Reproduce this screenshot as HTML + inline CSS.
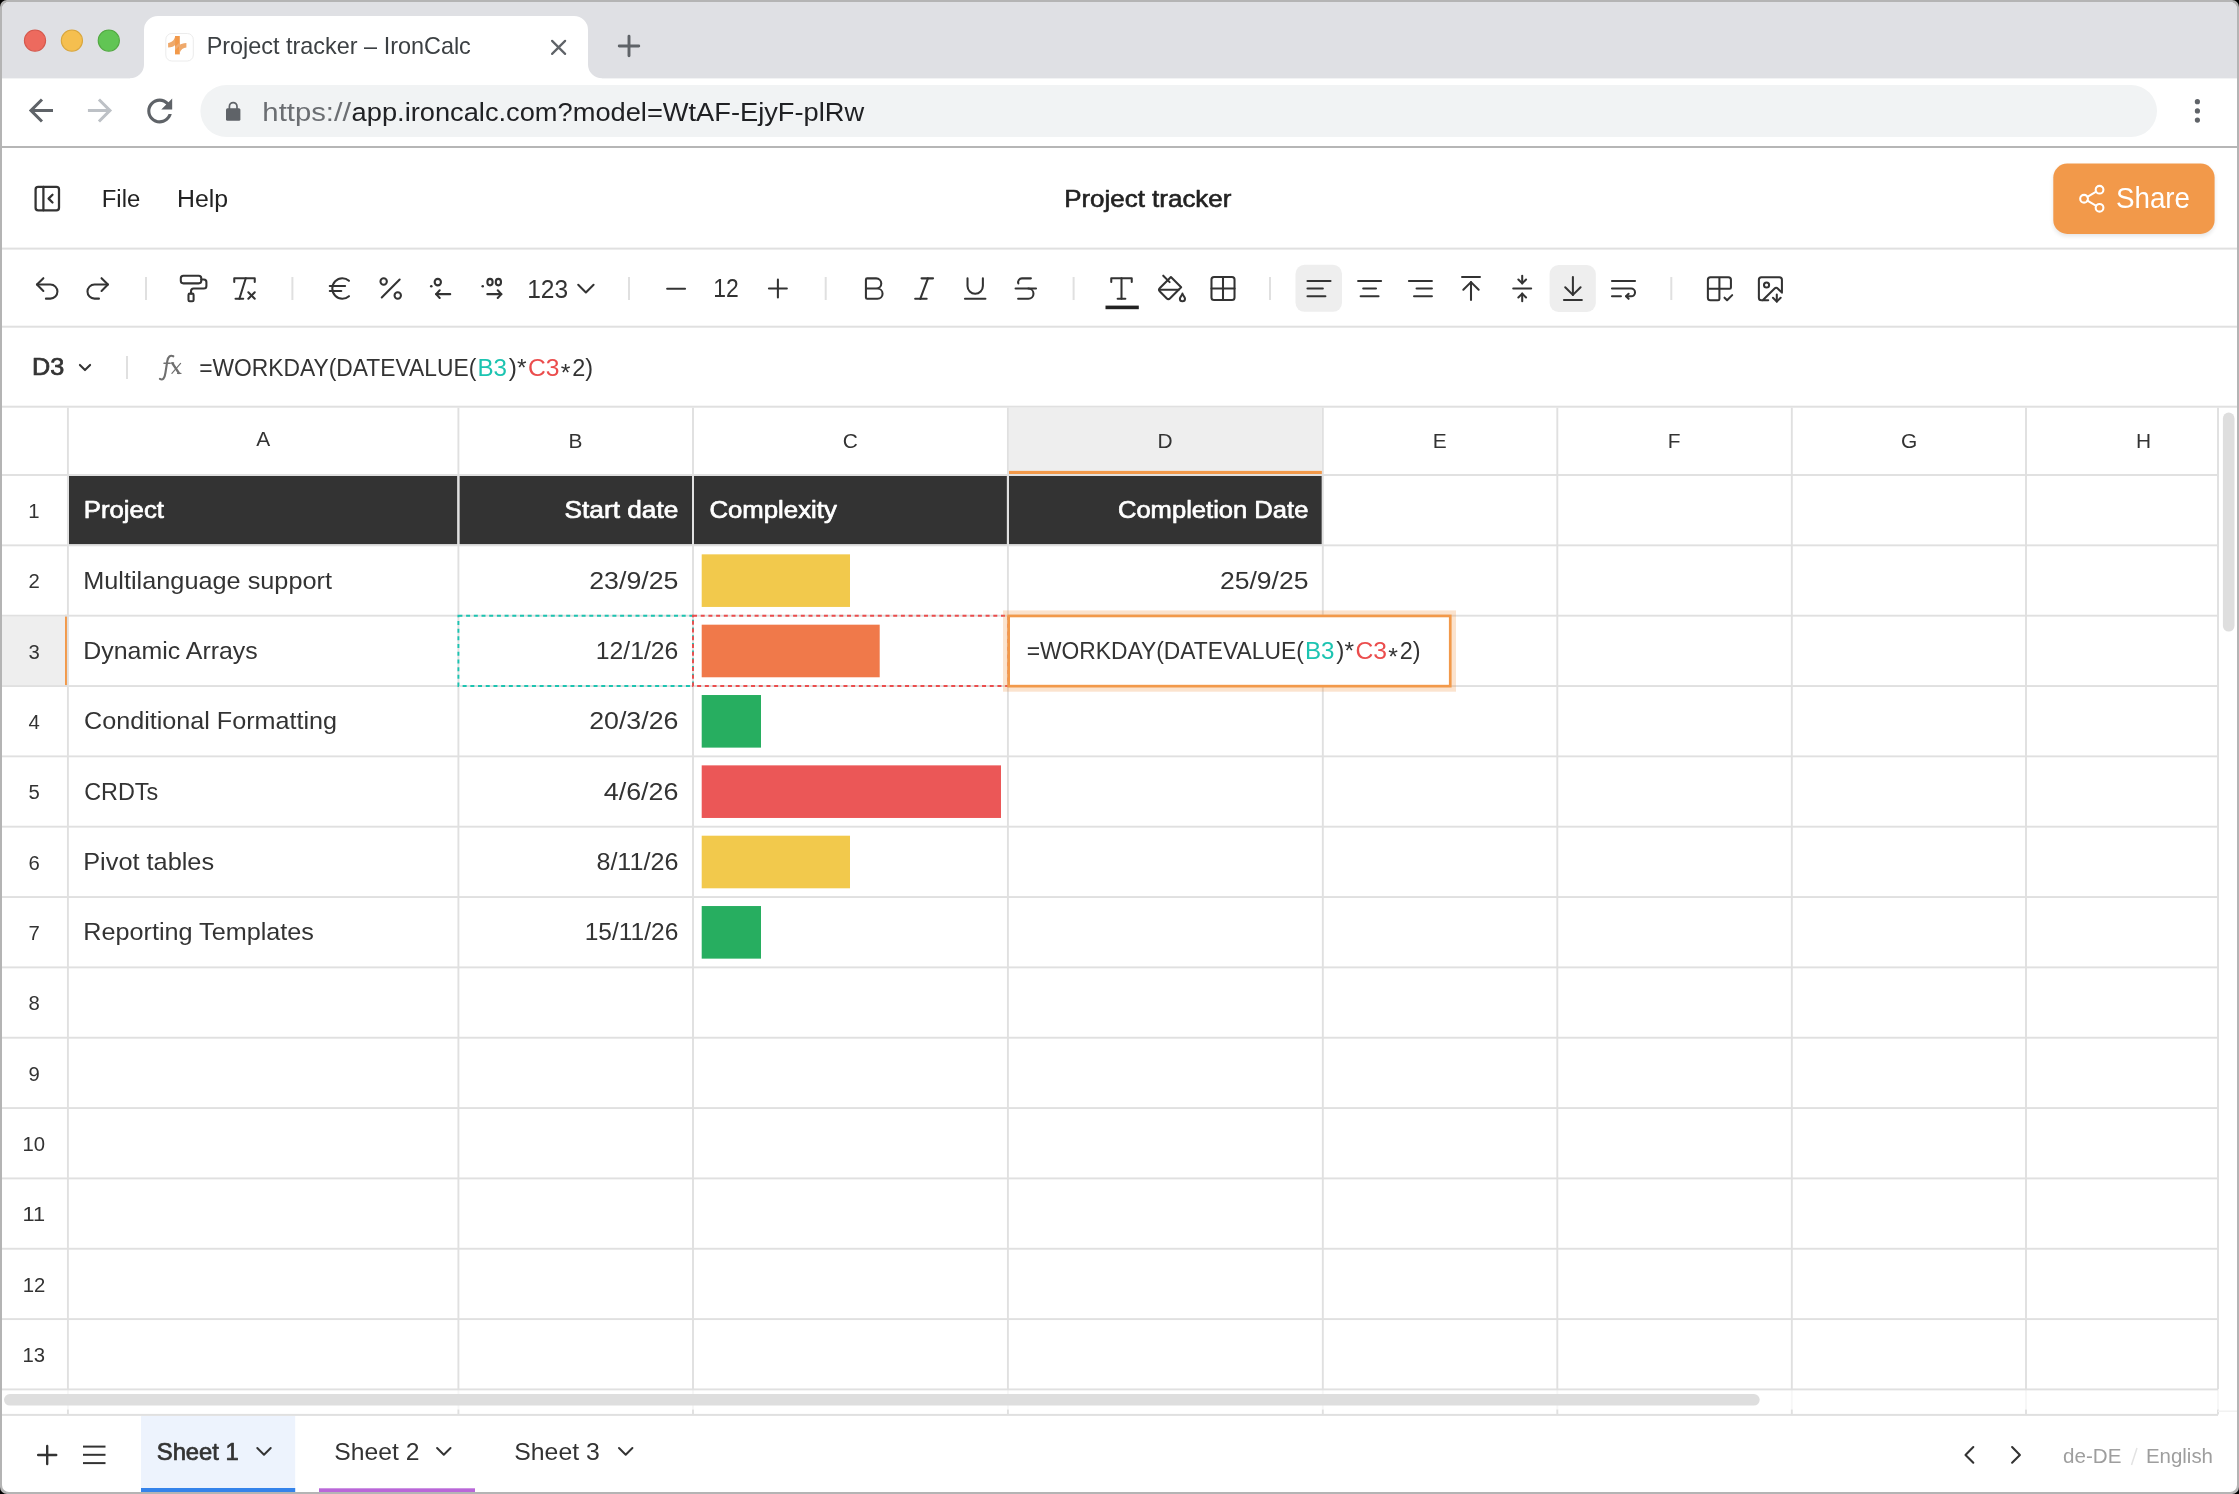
<!DOCTYPE html>
<html><head><meta charset="utf-8"><title>Project tracker – IronCalc</title>
<style>html,body{margin:0;padding:0;background:#000;overflow:hidden;width:2239px;height:1494px}
svg{will-change:transform}</style></head><body>
<svg width="2239" height="1494" viewBox="0 0 2239 1494" style="display:block">
<defs><clipPath id="win"><rect x="2" y="2" width="2235" height="1490" rx="7" ry="7"/></clipPath><filter id="sh" x="-20%" y="-20%" width="140%" height="160%"><feGaussianBlur stdDeviation="2"/></filter></defs>
<rect width="2239" height="1494" fill="#000"/>
<rect width="2239" height="1494" rx="7" fill="#b4b4b4"/>
<g clip-path="url(#win)">
<rect width="2239" height="1494" fill="#fff"/>
<rect x="0" y="0" width="2239" height="78.4" fill="#dfe0e4"/>
<path d="M130 78.4 A14 14 0 0 0 144 64.4 V30 A14 14 0 0 1 158 16 H574 A14 14 0 0 1 588 30 V64.4 A14 14 0 0 0 602 78.4 V80 H130 Z" fill="#fff"/>
<circle cx="35" cy="40.6" r="10.6" fill="#ed6a5e" stroke="#d5594d" stroke-width="1.1"/>
<circle cx="71.9" cy="40.6" r="10.6" fill="#f5bf4f" stroke="#d9a63c" stroke-width="1.1"/>
<circle cx="108.8" cy="40.6" r="10.6" fill="#61c554" stroke="#52a942" stroke-width="1.1"/>
<rect x="165.8" y="33.5" width="27.5" height="27.5" rx="6" fill="#fff" stroke="#ececec" stroke-width="1"/>
<rect x="175.0" y="36.0" width="4.8" height="18.4" fill="#f2994a"/>
<path d="M168.1 43 C171.5 42.6 174.2 40.6 175.2 36.3 V44.7 C174 46.5 171.5 47.4 168.1 47.6 Z" fill="#efa96b"/>
<path d="M186.4 43 C183 43.2 180.9 44 179.6 44.8 V53.1 C180.8 49.8 183.2 47.8 186.4 47.6 Z" fill="#efa96b"/>
<path d="M175.0 46.8 L179.8 42.2 V45.6 L175.0 50.2 Z" fill="#efab70"/>
<text x="206.68" y="54.00" font-family="Liberation Sans" font-size="24" fill="#3c4043" textLength="264.14" lengthAdjust="spacingAndGlyphs" >Project tracker – IronCalc</text>
<g transform="translate(547.44,36.24) scale(0.93)" fill="none" stroke="#5f6368" stroke-width="2.4" stroke-linecap="round" stroke-linejoin="round" ><path d="M5 5 L19 19 M19 5 L5 19"/></g>
<g transform="translate(614.36,31.36) scale(1.22)" fill="none" stroke="#5f6368" stroke-width="2.4" stroke-linecap="round" stroke-linejoin="round" ><path d="M12 4v16M4 12h16"/></g>
<rect x="0" y="146" width="2239" height="2" fill="#b6b6b6"/>
<rect x="200.4" y="85" width="1956.6" height="52" rx="26" fill="#f1f3f4"/>
<g transform="translate(40.9,110.5) scale(1.51) translate(-12,-12)" fill="#5f6368"><path d="M20 11H7.83l5.59-5.59L12 4l-8 8 8 8 1.41-1.41L7.83 13H20v-2z"/></g>
<g transform="translate(100,110.5) scale(1.51) translate(-12,-12)" fill="#bdc1c6"><path d="M4 11h12.17l-5.59-5.59L12 4l8 8-8 8-1.41-1.41L16.17 13H4v-2z"/></g>
<g transform="translate(159.7,111) scale(1.56) translate(-12,-12)" fill="#5f6368"><path d="M17.65 6.35C16.2 4.9 14.21 4 12 4c-4.42 0-7.99 3.58-7.99 8s3.57 8 7.99 8c3.73 0 6.840-2.55 7.73-6h-2.08c-.82 2.33-3.04 4-5.65 4-3.310 0-6-2.69-6-6s2.69-6 6-6c1.66 0 3.14.69 4.22 1.78L13 11h7V4l-2.35 2.35z"/></g>
<rect x="226" y="108.3" width="14.4" height="12.5" rx="1.5" fill="#5f6368"/>
<path d="M229.4 109 V106.4 A3.8 3.8 0 0 1 237 106.4 V109" fill="none" stroke="#5f6368" stroke-width="1.7"/>
<text x="262.37" y="121.10" font-family="Liberation Sans" font-size="26.3" fill="#6b6e72" textLength="71.60" lengthAdjust="spacingAndGlyphs" >https:</text>
<text x="334.00" y="121.10" font-family="Liberation Sans" font-size="26.3" fill="#6b6e72" textLength="17.00" lengthAdjust="spacingAndGlyphs" >//</text>
<text x="351.64" y="121.10" font-family="Liberation Sans" font-size="26.3" fill="#202124" textLength="512.49" lengthAdjust="spacingAndGlyphs" >app.ironcalc.com?model=WtAF-EjyF-plRw</text>
<circle cx="2197.4" cy="101.7" r="2.6" fill="#5f6368"/>
<circle cx="2197.4" cy="110.9" r="2.6" fill="#5f6368"/>
<circle cx="2197.4" cy="120.1" r="2.6" fill="#5f6368"/>
<rect x="0" y="247.6" width="2239" height="2" fill="#e0e0e0"/>
<g transform="translate(31.70,183.00) scale(1.3)" fill="none" stroke="#333" stroke-width="1.75" stroke-linecap="round" stroke-linejoin="round" ><rect width="18" height="18" x="3" y="3" rx="2"/><path d="M9 3v18"/><path d="m16 15-3-3 3-3"/></g>
<text x="101.74" y="206.50" font-family="Liberation Sans" font-size="24.4" fill="#222" textLength="38.52" lengthAdjust="spacingAndGlyphs" >File</text>
<text x="176.96" y="206.50" font-family="Liberation Sans" font-size="24.4" fill="#222" textLength="51.08" lengthAdjust="spacingAndGlyphs" >Help</text>
<text x="1064.17" y="206.70" font-family="Liberation Sans" font-size="24.0" stroke="#222" stroke-width="0.6" stroke-linejoin="round" fill="#222" textLength="167.26" lengthAdjust="spacingAndGlyphs" >Project tracker</text>
<rect x="2053.3" y="166" width="161.3" height="70.3" rx="14" fill="#000" opacity="0.10" filter="url(#sh)"/>
<rect x="2053.3" y="163.6" width="161.3" height="70.3" rx="14" fill="#f2994a"/>
<g transform="translate(2076.32,183.27) scale(1.29)" fill="none" stroke="#fff" stroke-width="1.6" stroke-linecap="round" stroke-linejoin="round" ><circle cx="18" cy="5" r="3"/><circle cx="6" cy="12" r="3"/><circle cx="18" cy="19" r="3"/><line x1="8.59" x2="15.42" y1="13.51" y2="17.49"/><line x1="15.41" x2="8.59" y1="6.51" y2="10.49"/></g>
<text x="2115.94" y="208.00" font-family="Liberation Sans" font-size="29" fill="#fff" textLength="74.09" lengthAdjust="spacingAndGlyphs" >Share</text>
<rect x="0" y="325.7" width="2239" height="2" fill="#e0e0e0"/>
<rect x="145" y="277" width="2" height="23" fill="#e0e0e0"/>
<rect x="291.4" y="277" width="2" height="23" fill="#e0e0e0"/>
<rect x="628" y="277" width="2" height="23" fill="#e0e0e0"/>
<rect x="824.7" y="277" width="2" height="23" fill="#e0e0e0"/>
<rect x="1072.6" y="277" width="2" height="23" fill="#e0e0e0"/>
<rect x="1269" y="277" width="2" height="23" fill="#e0e0e0"/>
<rect x="1670.3" y="277" width="2" height="23" fill="#e0e0e0"/>
<rect x="1295.5" y="264.8" width="46.5" height="47" rx="9" fill="#eeeeee"/>
<rect x="1549.6" y="265" width="46.2" height="47" rx="9" fill="#eeeeee"/>
<g transform="translate(31.84,273.04) scale(1.28)" fill="none" stroke="#333" stroke-width="1.6" stroke-linecap="round" stroke-linejoin="round" ><path d="M9 14 4 9l5-5"/><path d="M4 9h10.5a5.5 5.5 0 0 1 5.5 5.5a5.5 5.5 0 0 1-5.5 5.5H11"/></g>
<g transform="translate(82.34,273.04) scale(1.28)" fill="none" stroke="#333" stroke-width="1.6" stroke-linecap="round" stroke-linejoin="round" ><path d="m15 14 5-5-5-5"/><path d="M20 9H9.5A5.5 5.5 0 0 0 4 14.5A5.5 5.5 0 0 0 9.5 20H13"/></g>
<g transform="translate(178.24,273.14) scale(1.28)" fill="none" stroke="#333" stroke-width="1.6" stroke-linecap="round" stroke-linejoin="round" ><rect width="16" height="6" x="2" y="2" rx="2"/><path d="M10 16v-2a2 2 0 0 1 2-2h8a2 2 0 0 0 2-2V7a2 2 0 0 0-2-2h-2"/><rect width="4" height="6" x="8" y="16" rx="1"/></g>
<g transform="translate(229.14,273.14) scale(1.28)" fill="none" stroke="#333" stroke-width="1.6" stroke-linecap="round" stroke-linejoin="round" ><path d="M4 7V4h16v3"/><path d="M5 20h6"/><path d="M13 4 8 20"/><path d="m15 15 5 5"/><path d="m20 15-5 5"/></g>
<g transform="translate(324.64,273.14) scale(1.28)" fill="none" stroke="#333" stroke-width="1.6" stroke-linecap="round" stroke-linejoin="round" ><path d="M4 10h12"/><path d="M4 14h9"/><path d="M19 6a7.7 7.7 0 0 0-5.2-2A7.9 7.9 0 0 0 6 12c0 4.4 3.5 8 7.8 8 2 0 3.8-.8 5.2-2"/></g>
<g transform="translate(375.34,273.14) scale(1.28)" fill="none" stroke="#333" stroke-width="1.6" stroke-linecap="round" stroke-linejoin="round" ><line x1="19" x2="5" y1="5" y2="19"/><circle cx="6.5" cy="6.5" r="2.5"/><circle cx="17.5" cy="17.5" r="2.5"/></g>
<g transform="translate(425.64,273.14) scale(1.28)" fill="none" stroke="#333" stroke-width="1.65" stroke-linecap="round" stroke-linejoin="round" ><path d="M4.4 10.2h.01" stroke-width="2"/><ellipse cx="9.5" cy="7" rx="2.45" ry="2.55"/><path d="M19.2 16.4H8.2"/><path d="m11 13.4-2.8 3 2.8 3"/></g>
<g transform="translate(476.74,273.14) scale(1.28)" fill="none" stroke="#333" stroke-width="1.65" stroke-linecap="round" stroke-linejoin="round" ><path d="M4.66 10.2h.01" stroke-width="2"/><ellipse cx="10.36" cy="7" rx="2.05" ry="2.55"/><ellipse cx="16.9" cy="7" rx="2.05" ry="2.55"/><path d="M8.3 16.4h10.9"/><path d="m16.4 13.4 2.8 3-2.8 3"/></g>
<text x="527.13" y="297.60" font-family="Liberation Sans" font-size="25" fill="#333" textLength="40.95" lengthAdjust="spacingAndGlyphs" >123</text>
<g transform="translate(570.54,273.24) scale(1.28)" fill="none" stroke="#333" stroke-width="1.6" stroke-linecap="round" stroke-linejoin="round" ><path d="m6 9 6 6 6-6"/></g>
<g transform="translate(660.74,273.34) scale(1.28)" fill="none" stroke="#333" stroke-width="1.6" stroke-linecap="round" stroke-linejoin="round" ><path d="M5 12h14"/></g>
<text x="713.25" y="296.90" font-family="Liberation Sans" font-size="25" fill="#333" textLength="25.50" lengthAdjust="spacingAndGlyphs" >12</text>
<g transform="translate(762.54,273.24) scale(1.28)" fill="none" stroke="#333" stroke-width="1.6" stroke-linecap="round" stroke-linejoin="round" ><path d="M5 12h14"/><path d="M12 5v14"/></g>
<g transform="translate(858.24,273.24) scale(1.28)" fill="none" stroke="#333" stroke-width="1.6" stroke-linecap="round" stroke-linejoin="round" ><path d="M6 12h9a4 4 0 0 1 0 8H7a1 1 0 0 1-1-1V5a1 1 0 0 1 1-1h7a4 4 0 0 1 0 8"/></g>
<g transform="translate(908.74,273.24) scale(1.28)" fill="none" stroke="#333" stroke-width="1.6" stroke-linecap="round" stroke-linejoin="round" ><line x1="19" x2="10" y1="4" y2="4"/><line x1="14" x2="5" y1="20" y2="20"/><line x1="15" x2="9" y1="4" y2="20"/></g>
<g transform="translate(959.84,273.24) scale(1.28)" fill="none" stroke="#333" stroke-width="1.6" stroke-linecap="round" stroke-linejoin="round" ><path d="M6 4v6a6 6 0 0 0 12 0V4"/><line x1="4" x2="20" y1="20" y2="20"/></g>
<g transform="translate(1010.44,273.24) scale(1.28)" fill="none" stroke="#333" stroke-width="1.6" stroke-linecap="round" stroke-linejoin="round" ><path d="M16 4H9a3 3 0 0 0-2.83 4"/><path d="M14 12a4 4 0 0 1 0 8H6"/><line x1="4" x2="20" y1="12" y2="12"/></g>
<g transform="translate(1106.14,273.14) scale(1.28)" fill="none" stroke="#333" stroke-width="1.6" stroke-linecap="round" stroke-linejoin="round" ><polyline points="4 7 4 4 20 4 20 7"/><line x1="9" x2="15" y1="20" y2="20"/><line x1="12" x2="12" y1="4" y2="20"/></g>
<rect x="1105.5" y="305.6" width="33.3" height="3.6" fill="#222"/>
<g transform="translate(1156.84,273.14) scale(1.28)" fill="none" stroke="#333" stroke-width="1.6" stroke-linecap="round" stroke-linejoin="round" ><path d="m19 11-8-8-8.6 8.6a2 2 0 0 0 0 2.8l5.2 5.2c.8.8 2 .8 2.8 0L19 11Z"/><path d="m5 2 5 5"/><path d="M2 13h15"/><path d="M22 20a2 2 0 1 1-4 0c0-1.6 1.7-2.4 2-4 .3 1.6 2 2.4 2 4Z"/></g>
<g transform="translate(1207.64,273.14) scale(1.28)" fill="none" stroke="#333" stroke-width="1.6" stroke-linecap="round" stroke-linejoin="round" ><rect width="18" height="18" x="3" y="3" rx="2"/><path d="M3 12h18"/><path d="M12 3v18"/></g>
<g transform="translate(1303.64,273.24) scale(1.28)" fill="none" stroke="#333" stroke-width="1.6" stroke-linecap="round" stroke-linejoin="round" ><line x1="21" x2="3" y1="6" y2="6"/><line x1="15" x2="3" y1="12" y2="12"/><line x1="17" x2="3" y1="18" y2="18"/></g>
<g transform="translate(1354.24,273.24) scale(1.28)" fill="none" stroke="#333" stroke-width="1.6" stroke-linecap="round" stroke-linejoin="round" ><line x1="21" x2="3" y1="6" y2="6"/><line x1="17" x2="7" y1="12" y2="12"/><line x1="19" x2="5" y1="18" y2="18"/></g>
<g transform="translate(1405.04,273.24) scale(1.28)" fill="none" stroke="#333" stroke-width="1.6" stroke-linecap="round" stroke-linejoin="round" ><line x1="21" x2="3" y1="6" y2="6"/><line x1="21" x2="9" y1="12" y2="12"/><line x1="21" x2="7" y1="18" y2="18"/></g>
<g transform="translate(1455.64,273.14) scale(1.28)" fill="none" stroke="#333" stroke-width="1.6" stroke-linecap="round" stroke-linejoin="round" ><path d="M5 3h14"/><path d="m18 13-6-6-6 6"/><path d="M12 7v14"/></g>
<g transform="translate(1506.84,273.14) scale(1.28)" fill="none" stroke="#333" stroke-width="1.6" stroke-linecap="round" stroke-linejoin="round" ><path d="M5 12h14"/><path d="M12 2v6"/><path d="m9 5 3 3 3-3"/><path d="M12 22v-6"/><path d="m9 19 3-3 3 3"/></g>
<g transform="translate(1557.54,273.14) scale(1.28)" fill="none" stroke="#333" stroke-width="1.6" stroke-linecap="round" stroke-linejoin="round" ><path d="M12 17V3"/><path d="m6 11 6 6 6-6"/><path d="M19 21H5"/></g>
<g transform="translate(1608.14,273.24) scale(1.28)" fill="none" stroke="#333" stroke-width="1.6" stroke-linecap="round" stroke-linejoin="round" ><line x1="3" x2="21" y1="6" y2="6"/><path d="M3 12h15a3 3 0 1 1 0 6h-4"/><polyline points="16 16 14 18 16 20"/><line x1="3" x2="10" y1="18" y2="18"/></g>
<g transform="translate(1704.04,273.34) scale(1.28)" fill="none" stroke="#333" stroke-width="1.6" stroke-linecap="round" stroke-linejoin="round" ><path d="M12 3v17a1 1 0 0 1-1 1H5a2 2 0 0 1-2-2V5a2 2 0 0 1 2-2h14a2 2 0 0 1 2 2v6a1 1 0 0 1-1 1H3"/><path d="m16 19 2 2 4-4"/></g>
<g transform="translate(1755.04,273.44) scale(1.28)" fill="none" stroke="#333" stroke-width="1.6" stroke-linecap="round" stroke-linejoin="round" ><path d="M10.3 21H5a2 2 0 0 1-2-2V5a2 2 0 0 1 2-2h14a2 2 0 0 1 2 2v10l-3.1-3.1a2 2 0 0 0-2.814.014L6 21"/><path d="m14 19 3 3v-5.5"/><path d="m17 22 3-3"/><circle cx="9" cy="9" r="2"/></g>
<rect x="0" y="405.7" width="2239" height="2" fill="#e0e0e0"/>
<text x="32.08" y="375.30" font-family="Liberation Sans" font-size="23.5" stroke="#333" stroke-width="0.7" stroke-linejoin="round" fill="#333" textLength="32.28" lengthAdjust="spacingAndGlyphs" >D3</text>
<g transform="translate(74.80,357.30) scale(0.85)" fill="none" stroke="#333" stroke-width="2.4" stroke-linecap="round" stroke-linejoin="round" ><path d="m6 9 6 6 6-6"/></g>
<rect x="126" y="356" width="2" height="23" fill="#e0e0e0"/>
<g fill="none" stroke="#6f6f6f" stroke-linecap="round"><path d="M159.9 378.9 C162.6 380.6 164.6 378.6 165.4 373 L167.3 361 C168.2 356.4 170.3 354.8 173.3 356.3" stroke-width="2.1"/><path d="M164 363.3 H170.2" stroke-width="1.5"/><path d="M172.6 363.6 L178.8 372.9" stroke-width="2.4"/><path d="M180.6 363.4 L171.9 373.3" stroke-width="1.2"/><path d="M171.5 363 H173.6" stroke-width="1.3"/><path d="M177.6 373.4 H180.9" stroke-width="1.3"/></g>
<text x="199.21" y="375.50" font-family="Liberation Sans" font-size="24.4" fill="#333" textLength="277.03" lengthAdjust="spacingAndGlyphs" >=WORKDAY(DATEVALUE(</text>
<text x="477.42" y="375.50" font-family="Liberation Sans" font-size="24.4" fill="#1cc4b1" textLength="29.54" lengthAdjust="spacingAndGlyphs" >B3</text>
<text x="508.86" y="375.50" font-family="Liberation Sans" font-size="24.4" fill="#333" textLength="17.73" lengthAdjust="spacingAndGlyphs" >)*</text>
<text x="527.95" y="375.50" font-family="Liberation Sans" font-size="24.4" fill="#eb4d4d" textLength="31.54" lengthAdjust="spacingAndGlyphs" >C3</text>
<text x="560.70" y="381.10" font-family="Liberation Sans" font-size="24.4" fill="#333" textLength="9.69" lengthAdjust="spacingAndGlyphs" >*</text>
<text x="572.22" y="375.50" font-family="Liberation Sans" font-size="24.4" fill="#333" textLength="20.83" lengthAdjust="spacingAndGlyphs" >2)</text>
<rect x="1008.9" y="407.7" width="312.9" height="66.30000000000001" fill="#eeeeee"/>
<rect x="1008.6999999999999" y="470.9" width="313.29999999999995" height="3.2" fill="#f2994a"/>
<rect x="2" y="616.6800000000001" width="63" height="68.33999999999992" fill="#eeeeee"/>
<rect x="65" y="614.8800000000001" width="2.07" height="70.93999999999991" fill="#f2994a"/>
<rect x="68.9" y="476.0" width="388.5" height="68.34000000000003" fill="#333333"/>
<rect x="459.4" y="476.0" width="232.60000000000002" height="68.34000000000003" fill="#333333"/>
<rect x="694" y="476.0" width="312.9" height="68.34000000000003" fill="#333333"/>
<rect x="1008.9" y="476.0" width="312.9" height="68.34000000000003" fill="#333333"/>
<rect x="66.95" y="407.7" width="1.9" height="981.7" fill="#e0e0e0"/>
<rect x="66.95" y="1389.4" width="1.9" height="20.09999999999991" fill="#f7f7f7"/>
<rect x="66.95" y="1409.5" width="1.9" height="5" fill="#e0e0e0"/>
<rect x="457.45" y="407.7" width="1.9" height="981.7" fill="#e0e0e0"/>
<rect x="457.45" y="1389.4" width="1.9" height="20.09999999999991" fill="#f7f7f7"/>
<rect x="457.45" y="1409.5" width="1.9" height="5" fill="#e0e0e0"/>
<rect x="692.05" y="407.7" width="1.9" height="981.7" fill="#e0e0e0"/>
<rect x="692.05" y="1389.4" width="1.9" height="20.09999999999991" fill="#f7f7f7"/>
<rect x="692.05" y="1409.5" width="1.9" height="5" fill="#e0e0e0"/>
<rect x="1006.9499999999999" y="407.7" width="1.9" height="981.7" fill="#e0e0e0"/>
<rect x="1006.9499999999999" y="1389.4" width="1.9" height="20.09999999999991" fill="#f7f7f7"/>
<rect x="1006.9499999999999" y="1409.5" width="1.9" height="5" fill="#e0e0e0"/>
<rect x="1321.85" y="407.7" width="1.9" height="981.7" fill="#e0e0e0"/>
<rect x="1321.85" y="1389.4" width="1.9" height="20.09999999999991" fill="#f7f7f7"/>
<rect x="1321.85" y="1409.5" width="1.9" height="5" fill="#e0e0e0"/>
<rect x="1556.35" y="407.7" width="1.9" height="981.7" fill="#e0e0e0"/>
<rect x="1556.35" y="1389.4" width="1.9" height="20.09999999999991" fill="#f7f7f7"/>
<rect x="1556.35" y="1409.5" width="1.9" height="5" fill="#e0e0e0"/>
<rect x="1790.85" y="407.7" width="1.9" height="981.7" fill="#e0e0e0"/>
<rect x="1790.85" y="1389.4" width="1.9" height="20.09999999999991" fill="#f7f7f7"/>
<rect x="1790.85" y="1409.5" width="1.9" height="5" fill="#e0e0e0"/>
<rect x="2025.05" y="407.7" width="1.9" height="981.7" fill="#e0e0e0"/>
<rect x="2025.05" y="1389.4" width="1.9" height="20.09999999999991" fill="#f7f7f7"/>
<rect x="2025.05" y="1409.5" width="1.9" height="5" fill="#e0e0e0"/>
<rect x="2217.05" y="407.7" width="1.9" height="981.7" fill="#e0e0e0"/>
<rect x="2217.05" y="1389.4" width="1.9" height="20.09999999999991" fill="#f7f7f7"/>
<rect x="2217.05" y="1409.5" width="1.9" height="5" fill="#e0e0e0"/>
<rect x="0" y="474.05" width="2218" height="1.9" fill="#e0e0e0"/>
<rect x="0" y="544.39" width="2218" height="1.9" fill="#e0e0e0"/>
<rect x="0" y="614.73" width="2218" height="1.9" fill="#e0e0e0"/>
<rect x="0" y="685.0699999999999" width="2218" height="1.9" fill="#e0e0e0"/>
<rect x="0" y="755.41" width="2218" height="1.9" fill="#e0e0e0"/>
<rect x="0" y="825.75" width="2218" height="1.9" fill="#e0e0e0"/>
<rect x="0" y="896.0899999999999" width="2218" height="1.9" fill="#e0e0e0"/>
<rect x="0" y="966.43" width="2218" height="1.9" fill="#e0e0e0"/>
<rect x="0" y="1036.77" width="2218" height="1.9" fill="#e0e0e0"/>
<rect x="0" y="1107.11" width="2218" height="1.9" fill="#e0e0e0"/>
<rect x="0" y="1177.45" width="2218" height="1.9" fill="#e0e0e0"/>
<rect x="0" y="1247.79" width="2218" height="1.9" fill="#e0e0e0"/>
<rect x="0" y="1318.1299999999999" width="2218" height="1.9" fill="#e0e0e0"/>
<rect x="0" y="1388.47" width="2218" height="1.9" fill="#e0e0e0"/>
<text x="256.18" y="445.50" font-family="Liberation Sans" font-size="20.9" fill="#333" textLength="13.94" lengthAdjust="spacingAndGlyphs" >A</text>
<text x="568.42" y="448.00" font-family="Liberation Sans" font-size="20.9" fill="#333" textLength="13.94" lengthAdjust="spacingAndGlyphs" >B</text>
<text x="842.77" y="448.00" font-family="Liberation Sans" font-size="20.9" fill="#333" textLength="15.09" lengthAdjust="spacingAndGlyphs" >C</text>
<text x="1157.45" y="448.00" font-family="Liberation Sans" font-size="20.9" fill="#333" textLength="15.09" lengthAdjust="spacingAndGlyphs" >D</text>
<text x="1432.67" y="448.00" font-family="Liberation Sans" font-size="20.9" fill="#333" textLength="13.94" lengthAdjust="spacingAndGlyphs" >E</text>
<text x="1667.73" y="448.00" font-family="Liberation Sans" font-size="20.9" fill="#333" textLength="12.77" lengthAdjust="spacingAndGlyphs" >F</text>
<text x="1901.03" y="448.00" font-family="Liberation Sans" font-size="20.9" fill="#333" textLength="16.26" lengthAdjust="spacingAndGlyphs" >G</text>
<text x="2135.95" y="448.00" font-family="Liberation Sans" font-size="20.9" fill="#333" textLength="15.09" lengthAdjust="spacingAndGlyphs" >H</text>
<text x="28.28" y="518.00" font-family="Liberation Sans" font-size="20.3" fill="#333" textLength="11.29" lengthAdjust="spacingAndGlyphs" >1</text>
<text x="28.56" y="588.34" font-family="Liberation Sans" font-size="20.3" fill="#333" textLength="11.29" lengthAdjust="spacingAndGlyphs" >2</text>
<text x="28.61" y="658.68" font-family="Liberation Sans" font-size="20.3" fill="#333" textLength="11.29" lengthAdjust="spacingAndGlyphs" >3</text>
<text x="28.62" y="729.02" font-family="Liberation Sans" font-size="20.3" fill="#333" textLength="11.29" lengthAdjust="spacingAndGlyphs" >4</text>
<text x="28.57" y="799.36" font-family="Liberation Sans" font-size="20.3" fill="#333" textLength="11.29" lengthAdjust="spacingAndGlyphs" >5</text>
<text x="28.49" y="869.70" font-family="Liberation Sans" font-size="20.3" fill="#333" textLength="11.29" lengthAdjust="spacingAndGlyphs" >6</text>
<text x="28.55" y="940.04" font-family="Liberation Sans" font-size="20.3" fill="#333" textLength="11.29" lengthAdjust="spacingAndGlyphs" >7</text>
<text x="28.56" y="1010.38" font-family="Liberation Sans" font-size="20.3" fill="#333" textLength="11.29" lengthAdjust="spacingAndGlyphs" >8</text>
<text x="28.56" y="1080.72" font-family="Liberation Sans" font-size="20.3" fill="#333" textLength="11.29" lengthAdjust="spacingAndGlyphs" >9</text>
<text x="22.53" y="1151.06" font-family="Liberation Sans" font-size="20.3" fill="#333" textLength="22.58" lengthAdjust="spacingAndGlyphs" >10</text>
<text x="22.63" y="1221.40" font-family="Liberation Sans" font-size="20.3" fill="#333" textLength="22.58" lengthAdjust="spacingAndGlyphs" >11</text>
<text x="22.65" y="1291.74" font-family="Liberation Sans" font-size="20.3" fill="#333" textLength="22.58" lengthAdjust="spacingAndGlyphs" >12</text>
<text x="22.58" y="1362.08" font-family="Liberation Sans" font-size="20.3" fill="#333" textLength="22.58" lengthAdjust="spacingAndGlyphs" >13</text>
<rect x="701.7" y="554.34" width="148.30" height="52.6" fill="#f2c94c"/>
<rect x="701.7" y="624.68" width="178.00" height="52.6" fill="#f0794a"/>
<rect x="701.7" y="695.02" width="59.30" height="52.6" fill="#27ae60"/>
<rect x="701.7" y="765.36" width="299.30" height="52.6" fill="#eb5757"/>
<rect x="701.7" y="835.70" width="148.30" height="52.6" fill="#f2c94c"/>
<rect x="701.7" y="906.04" width="59.30" height="52.6" fill="#27ae60"/>
<text x="83.74" y="518.10" font-family="Liberation Sans" font-size="24.4" stroke="#fff" stroke-width="0.7" stroke-linejoin="round" fill="#fff" textLength="80.20" lengthAdjust="spacingAndGlyphs" >Project</text>
<text x="564.56" y="518.10" font-family="Liberation Sans" font-size="24.4" stroke="#fff" stroke-width="0.7" stroke-linejoin="round" fill="#fff" textLength="113.76" lengthAdjust="spacingAndGlyphs" >Start date</text>
<text x="709.44" y="518.10" font-family="Liberation Sans" font-size="24.4" stroke="#fff" stroke-width="0.7" stroke-linejoin="round" fill="#fff" textLength="127.36" lengthAdjust="spacingAndGlyphs" >Complexity</text>
<text x="1117.95" y="518.10" font-family="Liberation Sans" font-size="24.4" stroke="#fff" stroke-width="0.7" stroke-linejoin="round" fill="#fff" textLength="190.43" lengthAdjust="spacingAndGlyphs" >Completion Date</text>
<text x="83.23" y="588.64" font-family="Liberation Sans" font-size="24.4" fill="#333" textLength="248.76" lengthAdjust="spacingAndGlyphs" >Multilanguage support</text>
<text x="589.26" y="588.64" font-family="Liberation Sans" font-size="24.4" fill="#333" textLength="89.17" lengthAdjust="spacingAndGlyphs" >23/9/25</text>
<text x="83.27" y="658.98" font-family="Liberation Sans" font-size="24.4" fill="#333" textLength="174.52" lengthAdjust="spacingAndGlyphs" >Dynamic Arrays</text>
<text x="595.71" y="658.98" font-family="Liberation Sans" font-size="24.4" fill="#333" textLength="82.68" lengthAdjust="spacingAndGlyphs" >12/1/26</text>
<text x="84.02" y="729.32" font-family="Liberation Sans" font-size="24.4" fill="#333" textLength="253.00" lengthAdjust="spacingAndGlyphs" >Conditional Formatting</text>
<text x="589.15" y="729.32" font-family="Liberation Sans" font-size="24.4" fill="#333" textLength="89.32" lengthAdjust="spacingAndGlyphs" >20/3/26</text>
<text x="84.15" y="799.66" font-family="Liberation Sans" font-size="24.4" fill="#333" textLength="74.06" lengthAdjust="spacingAndGlyphs" >CRDTs</text>
<text x="603.78" y="799.66" font-family="Liberation Sans" font-size="24.4" fill="#333" textLength="74.70" lengthAdjust="spacingAndGlyphs" >4/6/26</text>
<text x="83.22" y="870.00" font-family="Liberation Sans" font-size="24.4" fill="#333" textLength="130.89" lengthAdjust="spacingAndGlyphs" >Pivot tables</text>
<text x="596.43" y="870.00" font-family="Liberation Sans" font-size="24.4" fill="#333" textLength="81.95" lengthAdjust="spacingAndGlyphs" >8/11/26</text>
<text x="83.26" y="940.34" font-family="Liberation Sans" font-size="24.4" fill="#333" textLength="230.74" lengthAdjust="spacingAndGlyphs" >Reporting Templates</text>
<text x="584.67" y="940.34" font-family="Liberation Sans" font-size="24.4" fill="#333" textLength="93.69" lengthAdjust="spacingAndGlyphs" >15/11/26</text>
<text x="1219.97" y="588.64" font-family="Liberation Sans" font-size="24.4" fill="#333" textLength="88.55" lengthAdjust="spacingAndGlyphs" >25/9/25</text>
<rect x="458.4" y="615.6800000000001" width="234.60000000000002" height="70.33999999999992" fill="none" stroke="#1cc4b1" stroke-width="1.9" stroke-dasharray="4 3.7"/>
<rect x="693" y="615.6800000000001" width="315.4" height="70.33999999999992" fill="none" stroke="#eb4d4d" stroke-width="1.9" stroke-dasharray="4 3.7"/>
<rect x="1003" y="610.4" width="453" height="81.3" fill="#f2994a" opacity="0.27"/>
<rect x="1008.65" y="615.95" width="441.6" height="70.2" fill="#fff" stroke="#f2994a" stroke-width="2.7"/>
<text x="1026.71" y="658.90" font-family="Liberation Sans" font-size="24.4" fill="#333" textLength="277.03" lengthAdjust="spacingAndGlyphs" >=WORKDAY(DATEVALUE(</text>
<text x="1304.92" y="658.90" font-family="Liberation Sans" font-size="24.4" fill="#1cc4b1" textLength="29.54" lengthAdjust="spacingAndGlyphs" >B3</text>
<text x="1336.36" y="658.90" font-family="Liberation Sans" font-size="24.4" fill="#333" textLength="17.73" lengthAdjust="spacingAndGlyphs" >)*</text>
<text x="1355.45" y="658.90" font-family="Liberation Sans" font-size="24.4" fill="#eb4d4d" textLength="31.54" lengthAdjust="spacingAndGlyphs" >C3</text>
<text x="1388.20" y="664.50" font-family="Liberation Sans" font-size="24.4" fill="#333" textLength="9.69" lengthAdjust="spacingAndGlyphs" >*</text>
<text x="1399.72" y="658.90" font-family="Liberation Sans" font-size="24.4" fill="#333" textLength="20.83" lengthAdjust="spacingAndGlyphs" >2)</text>
<rect x="2222.9" y="412.6" width="11.6" height="219" rx="5.8" fill="#dedede"/>
<rect x="4" y="1394" width="1755.7" height="11.6" rx="5.8" fill="#dedede"/>
<rect x="0" y="1413.9" width="2218" height="2" fill="#e0e0e0"/>
<rect x="2218" y="1410.5" width="21" height="1.5" fill="#f2f2f2"/>
<rect x="141" y="1416" width="154.2" height="78" fill="#edf3fd"/>
<rect x="141" y="1488" width="154.2" height="4" fill="#3583ea"/>
<rect x="319" y="1488.3" width="156" height="3.7" fill="#b967d8"/>
<g transform="translate(33.64,1441.44) scale(1.13)" fill="none" stroke="#333" stroke-width="2.1" stroke-linecap="round" stroke-linejoin="round" ><path d="M12 4v16M4 12h16"/></g>
<rect x="83" y="1445.6" width="22.5" height="2.0" fill="#333"/>
<rect x="83" y="1453.8" width="22.5" height="2.0" fill="#333"/>
<rect x="83" y="1462.1" width="22.5" height="2.0" fill="#333"/>
<text x="156.77" y="1460.00" font-family="Liberation Sans" font-size="23.2" stroke="#333" stroke-width="0.7" stroke-linejoin="round" fill="#333" textLength="82.04" lengthAdjust="spacingAndGlyphs" >Sheet 1</text>
<g transform="translate(250.56,1437.96) scale(1.12)" fill="none" stroke="#333" stroke-width="1.75" stroke-linecap="round" stroke-linejoin="round" ><path d="m6 9 6 6 6-6"/></g>
<text x="334.28" y="1459.50" font-family="Liberation Sans" font-size="23.8" fill="#333" textLength="85.16" lengthAdjust="spacingAndGlyphs" >Sheet 2</text>
<g transform="translate(430.36,1437.96) scale(1.12)" fill="none" stroke="#333" stroke-width="1.75" stroke-linecap="round" stroke-linejoin="round" ><path d="m6 9 6 6 6-6"/></g>
<text x="514.27" y="1459.50" font-family="Liberation Sans" font-size="23.8" fill="#333" textLength="85.52" lengthAdjust="spacingAndGlyphs" >Sheet 3</text>
<g transform="translate(612.26,1437.96) scale(1.12)" fill="none" stroke="#333" stroke-width="1.75" stroke-linecap="round" stroke-linejoin="round" ><path d="m6 9 6 6 6-6"/></g>
<g transform="translate(1953.80,1439.30) scale(1.3)" fill="none" stroke="#333" stroke-width="1.6" stroke-linecap="round" stroke-linejoin="round" ><path d="m15 18-6-6 6-6"/></g>
<g transform="translate(2000.40,1439.30) scale(1.3)" fill="none" stroke="#333" stroke-width="1.6" stroke-linecap="round" stroke-linejoin="round" ><path d="m9 18 6-6-6-6"/></g>
<text x="2063.04" y="1463.40" font-family="Liberation Sans" font-size="20.9" fill="#9e9e9e" textLength="58.35" lengthAdjust="spacingAndGlyphs" >de-DE</text>
<path d="M2137 1448 L2131.5 1465" stroke="#e3e3e3" stroke-width="1.5"/>
<text x="2145.92" y="1463.40" font-family="Liberation Sans" font-size="20.9" fill="#9e9e9e" textLength="67.11" lengthAdjust="spacingAndGlyphs" >English</text>
</g>
</svg>
</body></html>
